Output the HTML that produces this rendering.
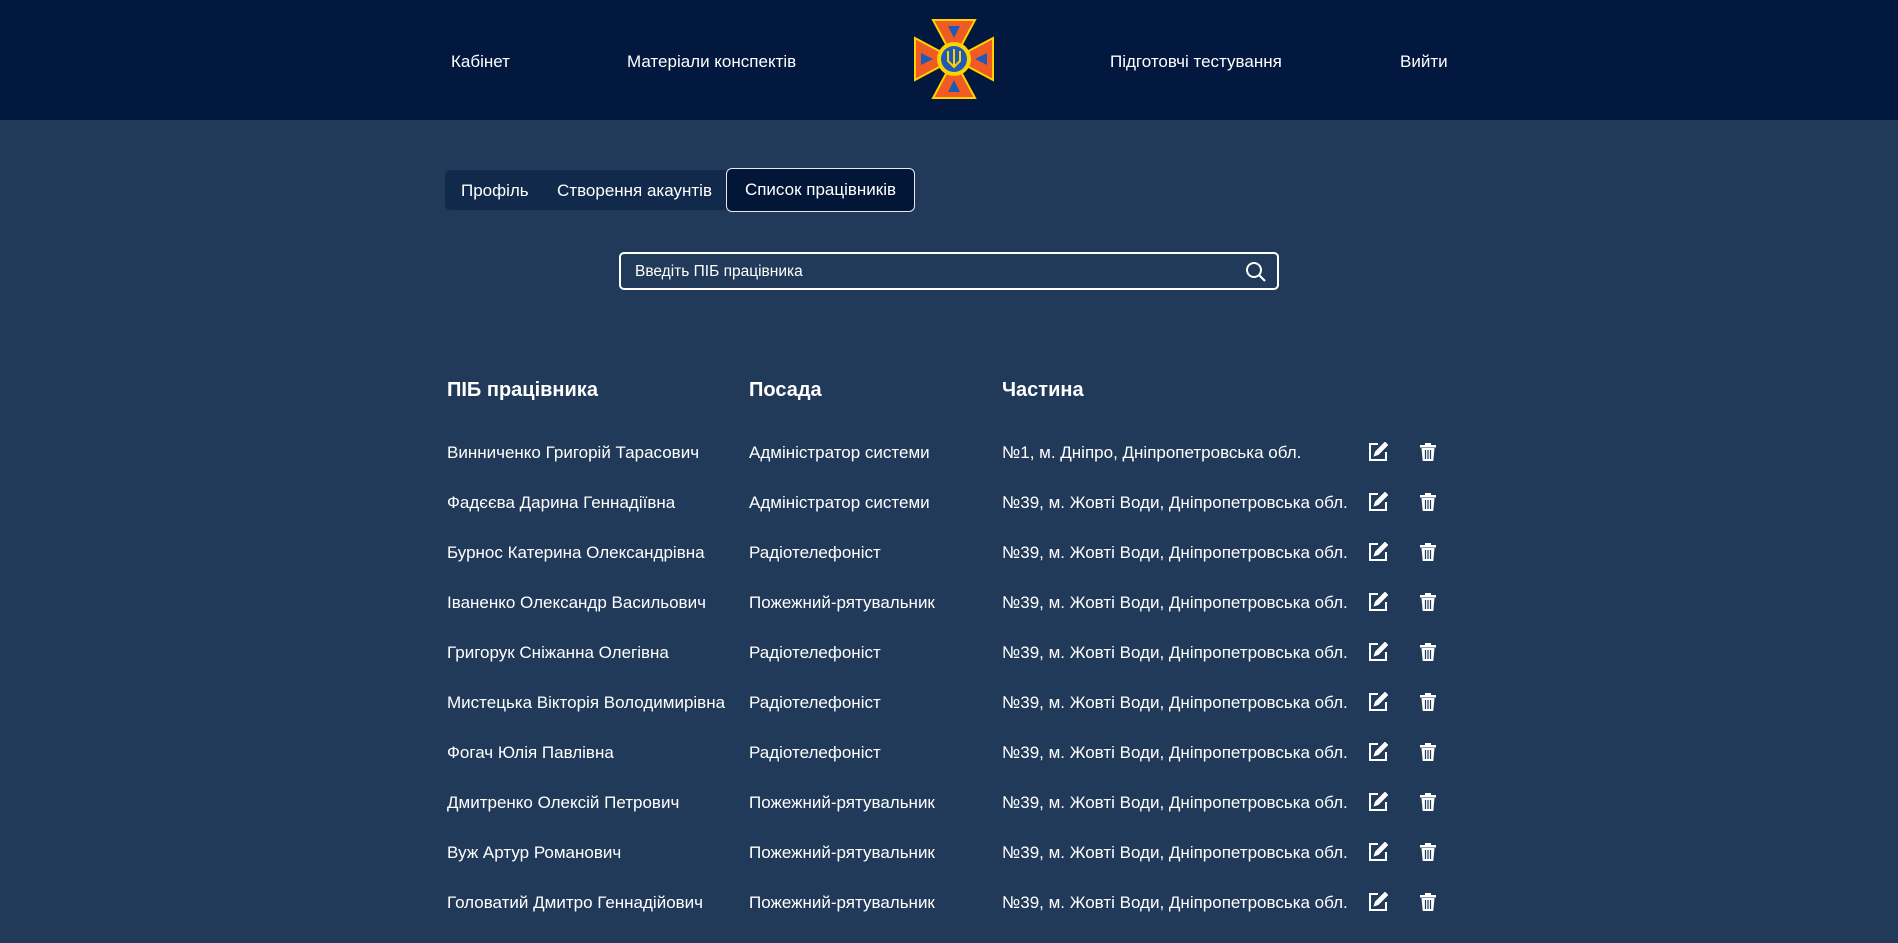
<!DOCTYPE html>
<html><head><meta charset="utf-8"><style>
*{box-sizing:border-box;margin:0;padding:0}
body{width:1898px;height:906px;overflow:hidden;background:#213a59;font-family:"Liberation Sans",Arial,sans-serif;color:#fff}
.hdr{height:120px;background:#02183f;position:relative}
.hdr a{position:absolute;top:52px;font-size:17px;color:#fff}
.logo{position:absolute;left:913px;top:18px}
.tabs{position:absolute;left:445px;top:170px;width:470px;height:40px;background:#112a4c;border-radius:5px}
.tab{position:absolute;top:1px;line-height:40px;font-size:17px}
.active{position:absolute;left:726px;top:168px;width:189px;height:44px;background:#021638;border:1.5px solid #e8e8e8;border-radius:6px;text-align:center;line-height:42px;font-size:17px}
.search{position:absolute;left:619px;top:252px;width:660px;height:38px;border:2px solid #fff;border-radius:5px;background:transparent;font-size:15.5px;padding-left:14px;line-height:36px}
.th{position:absolute;top:379px;font-size:20px;font-weight:bold}
.row{position:absolute;left:0;width:1898px;height:50px;font-size:17px}
.row span{position:absolute;top:0}
.row svg{position:absolute;top:-1px}
</style></head><body>
<div class="hdr">
<a style="left:451px">Кабінет</a>
<a style="left:627px">Матеріали конспектів</a>
<svg class="logo" width="82" height="82" viewBox="0 0 82 82">
<polygon points="20,2 62,2 47,30 41,33 35,30" fill="#f05a23" stroke="#ffd200" stroke-width="2"/>
<polygon points="20,80 62,80 47,52 41,49 35,52" fill="#f05a23" stroke="#ffd200" stroke-width="2"/>
<polygon points="2,20 2,62 30,47 33,41 30,35" fill="#f05a23" stroke="#ffd200" stroke-width="2"/>
<polygon points="80,20 80,62 52,47 49,41 52,35" fill="#f05a23" stroke="#ffd200" stroke-width="2"/>
<polygon points="35,8 47,8 41,20" fill="#1f5bb5"/><polygon points="35,74 47,74 41,62" fill="#1f5bb5"/>
<polygon points="8,35 8,47 20,41" fill="#1f5bb5"/><polygon points="74,35 74,47 62,41" fill="#1f5bb5"/>
<circle cx="41" cy="41" r="17" fill="#ffd200"/><circle cx="41" cy="41" r="13" fill="#1f5bb5"/>
<path d="M41 31v18M35 33v10l6 6 6-6V33" stroke="#ffd200" stroke-width="2" fill="none"/>
</svg>
<a style="left:1110px">Підготовчі тестування</a>
<a style="left:1400px">Вийти</a>
</div>
<div class="tabs"><span class="tab" style="left:16px">Профіль</span><span class="tab" style="left:112px">Створення акаунтів</span></div>
<div class="active">Список працівників</div>
<div class="search">Введіть ПІБ працівника
<svg style="position:absolute;right:10px;top:7px" width="22" height="22" viewBox="0 0 22 22" fill="none" stroke="#fff" stroke-width="2"><circle cx="9" cy="9" r="7"/><path d="M14 14l6 6"/></svg></div>
<div class="th" style="left:447px">ПІБ працівника</div>
<div class="th" style="left:749px">Посада</div>
<div class="th" style="left:1002px">Частина</div>
<div id="rows"></div>
<script>
var d=[["Винниченко Григорій Тарасович","Адміністратор системи","№1, м. Дніпро, Дніпропетровська обл."],
["Фадєєва Дарина Геннадіївна","Адміністратор системи","№39, м. Жовті Води, Дніпропетровська обл."],
["Бурнос Катерина Олександрівна","Радіотелефоніст","№39, м. Жовті Води, Дніпропетровська обл."],
["Іваненко Олександр Васильович","Пожежний-рятувальник","№39, м. Жовті Води, Дніпропетровська обл."],
["Григорук Сніжанна Олегівна","Радіотелефоніст","№39, м. Жовті Води, Дніпропетровська обл."],
["Мистецька Вікторія Володимирівна","Радіотелефоніст","№39, м. Жовті Води, Дніпропетровська обл."],
["Фогач Юлія Павлівна","Радіотелефоніст","№39, м. Жовті Води, Дніпропетровська обл."],
["Дмитренко Олексій Петрович","Пожежний-рятувальник","№39, м. Жовті Води, Дніпропетровська обл."],
["Вуж Артур Романович","Пожежний-рятувальник","№39, м. Жовті Води, Дніпропетровська обл."],
["Головатий Дмитро Геннадійович","Пожежний-рятувальник","№39, м. Жовті Води, Дніпропетровська обл."]];
var h="";
var ed='<svg style="left:1368px" width="20" height="20" viewBox="0 0 20 20" fill="none" stroke="#fff" stroke-width="2"><path d="M10 2H2v16h16v-8"/><path d="M17 1l2 2-9 9-3 1 1-3z" fill="#fff"/></svg>';
var tr='<svg style="left:1418px" width="20" height="20" viewBox="0 0 20 20"><rect x="2" y="3" width="16" height="2.5" fill="#fff"/><rect x="7" y="1" width="6" height="2.5" fill="#fff"/><path d="M3.5 6h13l-1.2 13H4.7z" fill="#fff"/><path d="M7.5 8v9M10 8v9M12.5 8v9" stroke="#213a59" stroke-width="1.2"/></svg>';
d.forEach(function(r,i){h+='<div class="row" style="top:'+(443+i*50)+'px"><span style="left:447px">'+r[0]+'</span><span style="left:749px">'+r[1]+'</span><span style="left:1002px">'+r[2]+'</span>'+ed+tr+'</div>';});
document.getElementById("rows").innerHTML=h;
</script>
</body></html>
